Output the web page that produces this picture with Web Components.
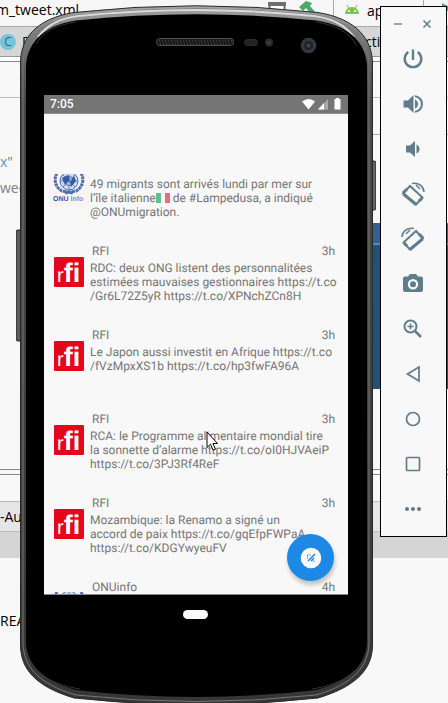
<!DOCTYPE html>
<html lang="fr">
<head>
<meta charset="utf-8">
<meta name="viewport" content="width=device-width">
<title>Emulator</title>
<style>
html,body{margin:0;height:100%;overflow:hidden;background:#f8f8f8}
</style>
</head>
<body>
<emulator-desktop></emulator-desktop>
<script>
const define = (name, html, setup) => customElements.define(name, class extends HTMLElement {
  connectedCallback() {
    if (this.shadowRoot) return;
    const t = document.createElement('template');
    t.innerHTML = html;
    this.attachShadow({mode: 'open'}).append(t.content.cloneNode(true));
    if (setup) setup(this, this.shadowRoot);
  }
});

/* IDE window seen behind the emulator */
define('ide-backdrop', `
<style>
:host{display:flex;flex-direction:column;height:100%;background:#f8f8f8;color:#000;font:14px/20px "Open Sans","Noto Sans",sans-serif;white-space:nowrap;overflow:hidden}
div{box-sizing:border-box;flex:none}
.bar{height:27px;display:flex;justify-content:space-between;border-bottom:1px solid #aaa;background:#f6f6f6}
.bar span{margin-left:-4px}
.tools{display:flex;width:180px;gap:8px}
.tools svg{flex:none}
.tabs{height:30px;background:#d6d6d6;border-bottom:1px solid #999;display:flex;align-items:center;justify-content:space-between}
.tabs .l{display:flex;align-items:center;gap:6px}
.c{width:16px;height:16px;border-radius:8px;background:#75c4de;color:#3d6678;font:12px/16px "Open Sans",sans-serif;text-align:center}
.r{width:83px}
.strip{height:5px;background:#fff;border-bottom:1px solid #888}
.crumb{height:36px;border-bottom:1px solid #bbb;padding:8px 0 0 17px;font-weight:700;color:#555}
.code{height:372px;display:flex;justify-content:space-between;border-bottom:1px solid #888;padding-top:54px}
.code p{margin:0;height:26px;color:#808080}
.code i{font-style:normal;color:#6a93c4}
.side{width:75px;margin-top:-54px;padding-top:36px}
.side .line{height:1px;background:#aaa}
.blue{margin-top:88px;height:166px;background:linear-gradient(#315f98 0 20px,#5c8ab8 20px 22px,#245071 22px)}
.gap{height:5px;border-bottom:1px solid #888}
.blank{height:26px}
.panel{height:31px;background:#e6e6e6;border-top:1px solid #bbb;border-bottom:1px solid #bbb;padding-top:5px}
.foot{height:26px;background:#d5d5d5}
.log{padding-top:53px;font-size:14px}
</style>
<div class="bar"><span>m_tweet.xml</span><div class="tools">
<svg width="180" height="26" viewBox="0 0 180 26"><path d="M1.500 3h15v10h-15z" fill="#fff" stroke="#6e6e6e" stroke-width="2"/><path d="M0 2h18v4H0z" fill="#6e6e6e"/><path d="M5 8l6 4-6 3z" fill="#59a869"/><path d="M31 7l7-6 6 2-2 3 6 7-3 3-7-8-3 3z" fill="#4ca866"/><path d="M65.500 0v24M155.500 0v26" stroke="#aaa"/><path d="M77 14a7 7 0 0 1 14 0z" fill="#7cc35a"/><path d="M79 5l2 4M89 5l-2 4" stroke="#7cc35a"/><circle cx="81" cy="11" r="1" fill="#fff"/><circle cx="87" cy="11" r="1" fill="#fff"/><text x="99" y="16" font-family="Open Sans" font-size="14">app</text><path d="M174 3l10 5-10 6z" fill="#59a869"/></svg></div></div>
<div class="tabs"><div class="l"><span class="c">C</span><span>D</span></div><span class="r">ctivity</span></div>
<div class="strip"></div>
<div class="crumb">⋮</div>
<div class="code"><div><p><i>x</i>"</p><p>wee</p></div><div class="side"><div class="line"></div><div class="blue"></div></div></div>
<div class="gap"></div><div class="blank"></div>
<div class="panel">-Au</div><div class="foot"></div>
<div class="log">READ</div>
`);

define('status-bar', `
<style>
:host{display:flex;align-items:center;justify-content:space-between;flex:none;height:19px;padding:0 7px 0 6px;background:#757575;color:#fff;font:500 12px/19px Roboto,sans-serif;border-bottom:1px solid #909090;box-sizing:border-box}
</style>
<span>7:05</span>
<svg width="40" height="14" viewBox="0 0 40 14" aria-hidden="true"><path d="M1 4.500Q8-.5 14 4.500L7.500 12.500z" fill="#fff"/><path d="M27 2v10.500H17z" fill="#a9a9a9"/><path d="M23 6v6.500h-6z" fill="#fff"/><path d="M33.500 2h1.500V1h3v1h1.500v10.500h-6z" fill="#fff"/></svg>
`);

define('rfi-logo', `
<style>:host{display:block;width:30px;height:30px}svg{display:block}text{fill:#fff;font-family:"Liberation Sans",Arimo,sans-serif;font-weight:700}</style>
<svg width="30" height="30" viewBox="0 0 30 30"><rect width="30" height="30" rx="1" fill="#e4061b"/><text x="3" y="25" font-size="27"><tspan font-size="20" style="font-weight:400">r</tspan>fi</text></svg>
`);

define('onu-logo', `
<style>:host{display:block;width:40px;height:40px}svg{display:block}text{font:700 7px "Liberation Sans",sans-serif;fill:#34549a}</style>
<svg width="40" height="40" viewBox="0 0 40 40"><rect width="40" height="34" fill="#faf3f6"/><g fill="none" stroke="#4c70ae"><circle cx="20" cy="8" r="9" fill="#c9d8ec"/><circle cx="20" cy="8" r="4.500"/><path d="M11 8h18M20 0v17M14 2l12 12M26 2L14 14" stroke-width=".7"/><path d="M8 0C4 7 7 15 13 18l11 2M32 0c4 7 1 15-5 18l-11 2" stroke-width="3" stroke-dasharray="3 .6"/></g><path d="M13 5l6-3 2 4-5 6zM21 9l4-6 2 5-5 6z" fill="#345c9f"/><text x="4" y="28">ONU <tspan fill="#8090b8">Info</tspan></text></svg>
`);

define('tweet-item', `
<style>
:host{display:grid;grid-template-columns:40px 1fr;flex:none;height:84px;box-sizing:border-box;padding-left:5px;font:12px/14px Roboto,sans-serif;color:#757575;text-rendering:geometricPrecision}
.pic{padding-top:13px;display:flex;justify-content:center;align-items:start}
:host(:last-of-type) .pic{padding-top:12px}
header{display:flex;justify-content:space-between;padding:0 13px 0 3px;height:17px}
p{margin:0 4px 0 1px;white-space:pre-line}
</style>
<div class="pic"><slot name="avatar"></slot></div>
<div><header><span class="n"></span><time></time></header><p><slot></slot></p></div>
`, (el, root) => {
  root.querySelector('.n').textContent = el.getAttribute('name');
  root.querySelector('time').textContent = el.getAttribute('age');
});

define('compose-button', `
<style>
:host{position:absolute;right:14px;bottom:13px}
button{display:grid;place-items:center;width:47px;height:47px;padding:0;border:0;border-radius:50%;background:#1e88e5;box-shadow:1px 4px 4px rgba(0,0,0,.22)}
</style>
<button aria-label="Tweet"><svg width="22" height="22" viewBox="0 0 22 22"><circle cx="11" cy="11" r="10.300" fill="#fafafa"/><path d="M8 14l7-7M11 14l3-3" stroke="#1e88e5" stroke-width="1.500"/><path d="M7 8h4M7.500 8v4M12 14h3" stroke="#6bb1ee"/></svg></button>
`);

define('phone-device', `
<style>
:host{display:flex;flex-direction:column;position:absolute;left:16px;right:72px;top:4px;bottom:-8px}
.shell{position:absolute;inset:0;width:100%;height:100%}
.screen{position:relative;flex:1;display:flex;flex-direction:column;margin:91px 28px 116px;background:#f8f8f8;border-bottom:1px solid #888;overflow:hidden;min-height:0}
.list{margin-top:60px;overflow:hidden;display:flex;flex-direction:column;flex:1;min-height:0}
.list>slot{display:flex;flex-direction:column;margin-top:-14px}
</style>
<svg class="shell" viewBox="0 0 360 707" preserveAspectRatio="none" aria-hidden="true">
<defs><linearGradient id="m" x1="0" y1="0" x2="0" y2="1"><stop offset="0" stop-color="#a5a5a5"/><stop offset=".03" stop-color="#858585"/><stop offset=".09" stop-color="#5a5a5a"/><stop offset=".14" stop-color="#484848"/><stop offset="1" stop-color="#363636"/></linearGradient></defs>
<rect x="0" y="226" width="6" height="111" rx="2" fill="#5b5b5b" stroke="#222"/>
<rect x="354" y="157" width="6" height="49" rx="2" fill="#666" stroke="#222"/>
<path d="M4.500 58C5 36 18 15 58 8.500Q180-5 302 8.500C342 15 355.500 36 356.500 58V642C356 664 342 682 302 694Q180 708 58 694C18 682 5 664 4.500 642Z" fill="url(#m)" stroke="#2a2a2a"/>
<path d="M7 60C8 38 22 18 60 11.500Q180-2 300 11.500C338 18 352 38 353 60V640C352 662 338 680 300 691Q180 704 60 691C22 680 8 662 7 640Z" fill="none" stroke="#777"/>
<path d="M22 33C32 20 44 14.500 62 12Q180 0 298 12C316 14.500 328 20 338 33" fill="none" stroke="#dadada" stroke-width="2"/>
<path d="M10 62C11 42 24 22 60 16.500Q180 4 300 16.500C337 22 350 42 351 62V638C350 659 337 676 300 686Q180 700 60 686C24 676 11 659 10 638Z" fill="#000"/>
<path d="M20 40C28 27 40 21 60 18M341 42C333 28 320 21 300 18M22 667C32 677 46 682 64 685M338 667C328 677 314 682 296 685" fill="none" stroke="#333"/>
<rect x="140.500" y="34.500" width="77" height="7" rx="3" fill="#1b1b1b" stroke="#505050"/><path d="M143 37h73M144 40h72" stroke="#555" stroke-dasharray="1 2"/>
<rect x="228.500" y="35.500" width="13" height="6" rx="3" fill="#222" stroke="#2c2c2c"/><circle cx="253" cy="38.500" r="4" fill="#2b2b2b"/><circle cx="253" cy="38.500" r="1.500" fill="#444"/>
<circle cx="292.500" cy="41.500" r="7.800" fill="#34383d"/><circle cx="292.500" cy="41.500" r="4.500" fill="#20242a"/><circle cx="292.500" cy="41.500" r="2" fill="#3e4650"/>
<rect x="167" y="606" width="25" height="9" rx="4.500" fill="#fafafa"/>
</svg>
<div class="screen"><status-bar></status-bar><div class="list"><slot></slot></div><compose-button></compose-button></div>
`);

const ic = (label, body) => `<button aria-label="${label}" title="${label}"><svg width="24" height="24" viewBox="0 0 24 24">${body}</svg></button>`;
define('emulator-toolbar', `
<style>
:host{display:flex;flex-direction:column;position:absolute;right:1px;top:6px;width:67px;box-sizing:border-box;border:1px solid #000;background:#f8f8f8;color:#607d8b;padding-bottom:5px}
.win{display:flex;justify-content:space-between;padding:9px 11px 0 9px;height:20px}
.win button{height:16px;width:16px}
nav{display:flex;flex-direction:column;padding-right:1px}
button{padding:0;border:0;background:none;color:inherit;display:grid;place-items:center;height:45px}
svg{display:block;fill:currentColor}
.s{fill:none;stroke:currentColor;stroke-width:2}
</style>
<div class="win"><button aria-label="Minimize"><svg width="16" height="16"><path d="M4 7h8v2H4z" opacity=".65"/></svg></button><button aria-label="Close"><svg width="16" height="16"><path class="s" style="stroke-width:1.500" d="M4.500 4.500l7 7M11.500 4.500l-7 7"/></svg></button></div>
<nav>
${ic('Power','<path class="s" style="stroke-width:2.400" d="M12 2.500v10.500M7.300 5a8.300 8.300 0 1 0 9.400 0"/>')}
${ic('Volume up','<path d="M2.500 8.500H7l5.500-5.500v18L7 15.500H2.500zM14 7.500q3 1.500 3 4.500t-3 4.500z"/><path class="s" d="M14 4q7 2 7 8t-7 8"/>')}
${ic('Volume down','<path d="M5 8.500h4l5-4.500v16l-5-4.500H5zM15.500 7.500q3 1.500 3 4.500t-3 4.500z"/>')}
${ic('Rotate left','<path class="s" d="M2 11.500L9 4l12.500 11.500-6.500 7z"/><path class="s" style="stroke-width:3" d="M2.500 12L15 22.500M2 11l4-4M18 19l3-3"/><path class="s" style="stroke-width:1.500" d="M11 1.500C18 .5 22.500 4 23 10M15 3l4 4"/>')}
${ic('Rotate right','<path class="s" d="M22 11.500L15 4 2.500 15.500 9 22.500z"/><path class="s" style="stroke-width:3" d="M21.500 12L9 22.500M22 11l-4-4M6 19l-3-3"/><path class="s" style="stroke-width:1.500" d="M13 1.500C6 .5 1.500 4 1 10M9 3L5 7"/>')}
${ic('Screenshot','<path fill-rule="evenodd" d="M9 2h6l2 2.500h3a2 2 0 0 1 2 2V18a2 2 0 0 1-2 2H4a2 2 0 0 1-2-2V6.500a2 2 0 0 1 2-2h3zM12 7a5.200 5.200 0 1 0 0 10.400A5.200 5.200 0 0 0 12 7z"/><circle cx="12" cy="12.200" r="3"/>')}
${ic('Zoom','<circle class="s" cx="9.500" cy="9.500" r="6"/><path class="s" style="stroke-width:1.500" d="M9.500 6.500v6M6.500 9.500h6"/><path class="s" style="stroke-width:2.500" d="M14 14l6 6"/>')}
${ic('Back','<path class="s" style="stroke-width:1.700" d="M18 5v14L6.500 12z"/>')}
${ic('Home','<circle class="s" style="stroke-width:1.700" cx="12" cy="12" r="6.500"/>')}
${ic('Overview','<rect class="s" style="stroke-width:1.700" x="5.500" y="5.500" width="13" height="13" rx="1"/>')}
${ic('More','<circle cx="6" cy="12" r="2"/><circle cx="12" cy="12" r="2"/><circle cx="18" cy="12" r="2"/>')}
</nav>
`);

define('flag-it', `<style>:host{display:inline-block;width:14px;height:10px;vertical-align:-1px;background:linear-gradient(90deg,#5fc08a 0 5px,#f6f6f6 5px 9px,#e0707a 9px)}</style>`);

define('emulator-desktop', `
<style>
:host{display:block;position:relative;height:100vh;overflow:hidden}
.cursor{position:absolute;left:206px;top:431px}
</style>
<ide-backdrop></ide-backdrop>
<phone-device>
<tweet-item name="ONUinfo" age="3h"><onu-logo slot="avatar"></onu-logo>49 migrants sont arrivés lundi par mer sur
l’île italienne<flag-it></flag-it> de #Lampedusa, a indiqué
@ONUmigration.</tweet-item>
<tweet-item name="RFI" age="3h"><rfi-logo slot="avatar"></rfi-logo>RDC: deux ONG listent des personnalitées
estimées mauvaises gestionnaires https://t.co
/Gr6L72Z5yR https://t.co/XPNchZCn8H</tweet-item>
<tweet-item name="RFI" age="3h"><rfi-logo slot="avatar"></rfi-logo>Le Japon aussi investit en Afrique https://t.co
/fVzMpxXS1b https://t.co/hp3fwFA96A</tweet-item>
<tweet-item name="RFI" age="3h"><rfi-logo slot="avatar"></rfi-logo>RCA: le Programme alimentaire mondial tire
la sonnette d’alarme https://t.co/oI0HJVAeiP
https://t.co/3PJ3Rf4ReF</tweet-item>
<tweet-item name="RFI" age="3h"><rfi-logo slot="avatar"></rfi-logo>Mozambique: la Renamo a signé un
accord de paix https://t.co/gqEfpFWPaA
https://t.co/KDGYwyeuFV</tweet-item>
<tweet-item name="ONUinfo" age="4h"><onu-logo slot="avatar"></onu-logo></tweet-item>
</phone-device>
<emulator-toolbar></emulator-toolbar>
<svg class="cursor" width="13" height="21" viewBox="0 0 13 21" aria-hidden="true"><path d="M1 1v15.500l3.500-3.300 2.600 6 2.400-1-2.600-5.700h4.600z" fill="#fff" stroke="#000"/></svg>
`);
</script>
</body>
</html>
